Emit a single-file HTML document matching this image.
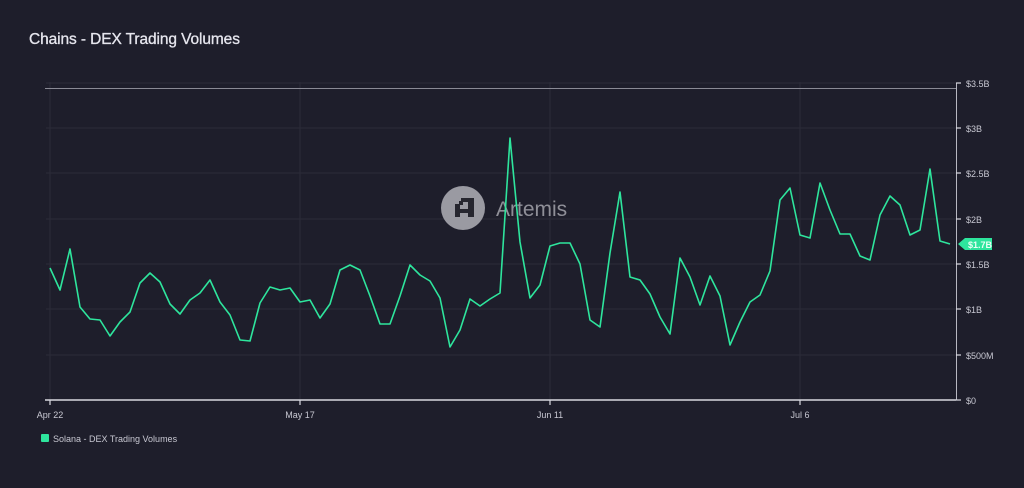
<!DOCTYPE html>
<html><head><style>
html,body{margin:0;padding:0;background:#1e1e2b;width:1024px;height:488px;overflow:hidden;font-family:"Liberation Sans",sans-serif}
.t{position:absolute;left:29px;top:31px;color:#e6e6ee;font-size:15.5px;font-weight:normal;letter-spacing:-0.1px;-webkit-text-stroke:0.3px #e6e6ee}
</style></head><body>
<div class="t">Chains - DEX Trading Volumes</div>
<svg width="1024" height="488" style="position:absolute;left:0;top:0">
<g stroke="#2c2c38" stroke-width="1">
<line x1="46" y1="83" x2="956" y2="83"/><line x1="46" y1="128" x2="956" y2="128"/>
<line x1="46" y1="173" x2="956" y2="173"/><line x1="46" y1="219" x2="956" y2="219"/>
<line x1="46" y1="264" x2="956" y2="264"/><line x1="46" y1="309" x2="956" y2="309"/>
<line x1="46" y1="355" x2="956" y2="355"/>
<line x1="50" y1="82" x2="50" y2="400"/><line x1="300" y1="82" x2="300" y2="400"/>
<line x1="550" y1="82" x2="550" y2="400"/><line x1="800" y1="82" x2="800" y2="400"/>
</g>
<line x1="45" y1="88.5" x2="956" y2="88.5" stroke="#8a8a95" stroke-width="1"/>
<line x1="45" y1="400" x2="956" y2="400" stroke="#d8d8e0" stroke-width="1.5"/>
<line x1="956.5" y1="83" x2="956.5" y2="400" stroke="#b8b8c2" stroke-width="1"/>
<g stroke="#d8d8e0" stroke-width="1.2">
<line x1="50" y1="400" x2="50" y2="405"/><line x1="300" y1="400" x2="300" y2="405"/>
<line x1="550" y1="400" x2="550" y2="405"/><line x1="800" y1="400" x2="800" y2="405"/>
<line x1="956" y1="83" x2="961" y2="83"/><line x1="956" y1="128" x2="961" y2="128"/>
<line x1="956" y1="173" x2="961" y2="173"/><line x1="956" y1="219" x2="961" y2="219"/>
<line x1="956" y1="264" x2="961" y2="264"/><line x1="956" y1="309" x2="961" y2="309"/>
<line x1="956" y1="355" x2="961" y2="355"/><line x1="956" y1="400" x2="961" y2="400"/>
</g>
<g fill="#c8c8d2" font-size="9" font-family="Liberation Sans,sans-serif">
<text x="966" y="87">$3.5B</text><text x="966" y="132">$3B</text><text x="966" y="177">$2.5B</text>
<text x="966" y="223">$2B</text><text x="966" y="268">$1.5B</text><text x="966" y="313">$1B</text>
<text x="966" y="359">$500M</text><text x="966" y="404">$0</text>
<text x="50" y="418" text-anchor="middle">Apr 22</text><text x="300" y="418" text-anchor="middle">May 17</text>
<text x="550" y="418" text-anchor="middle">Jun 11</text><text x="800" y="418" text-anchor="middle">Jul 6</text>
<text x="53" y="442">Solana - DEX Trading Volumes</text>
</g>
<rect x="41" y="434" width="8" height="8" rx="1" fill="#2ee59d"/>
<circle cx="463" cy="208" r="22" fill="#9a9aa2"/>
<g fill="#26262f">
<rect x="461" y="198" width="13" height="4"/>
<rect x="468" y="198" width="6" height="19"/>
<rect x="459" y="201" width="4" height="4"/>
<rect x="455" y="204" width="5" height="13"/>
<rect x="455" y="209" width="19" height="4"/>
</g>
<text x="496" y="216" fill="#8f8f98" font-size="21" font-family="Liberation Sans,sans-serif">Artemis</text>
<polyline fill="none" stroke="#2ee59d" stroke-width="1.6" stroke-linejoin="round" points="50,268 60,290 70,249 80,307 90,319 100,320 110,336 120,322 130,312 140,283 150,273 160,282 170,304 180,314 190,300 200,293 210,280 220,302 230,315 240,340 250,341 260,303 270,287 280,290 290,288 300,302 310,300 320,318 330,304 340,270 350,265 360,270 370,296 380,324 390,324 400,296 410,265 420,275 430,281 440,298 450,347 460,330 470,299 480,306 490,299 500,293 510,138 520,242 530,298 540,285 550,246 560,243 570,243 580,264 590,320 600,327 610,253 620,192 630,277 640,280 650,294 660,317 670,334 680,258 690,277 700,305 710,276 720,296 730,345 740,322 750,302 760,295 770,271 780,200 790,188 800,235 810,238 820,183 830,210 840,234 850,234 860,256 870,260 880,215 890,196 900,205 910,235 920,230 930,169 940,241 950,244"/>
<path d="M958 244 L965 238 H992 V250 H965 Z" fill="#2ee59d"/>
<text x="968" y="248" fill="#eafff5" font-size="9" font-weight="bold" font-family="Liberation Sans,sans-serif">$1.7B</text>
</svg>
</body></html>
